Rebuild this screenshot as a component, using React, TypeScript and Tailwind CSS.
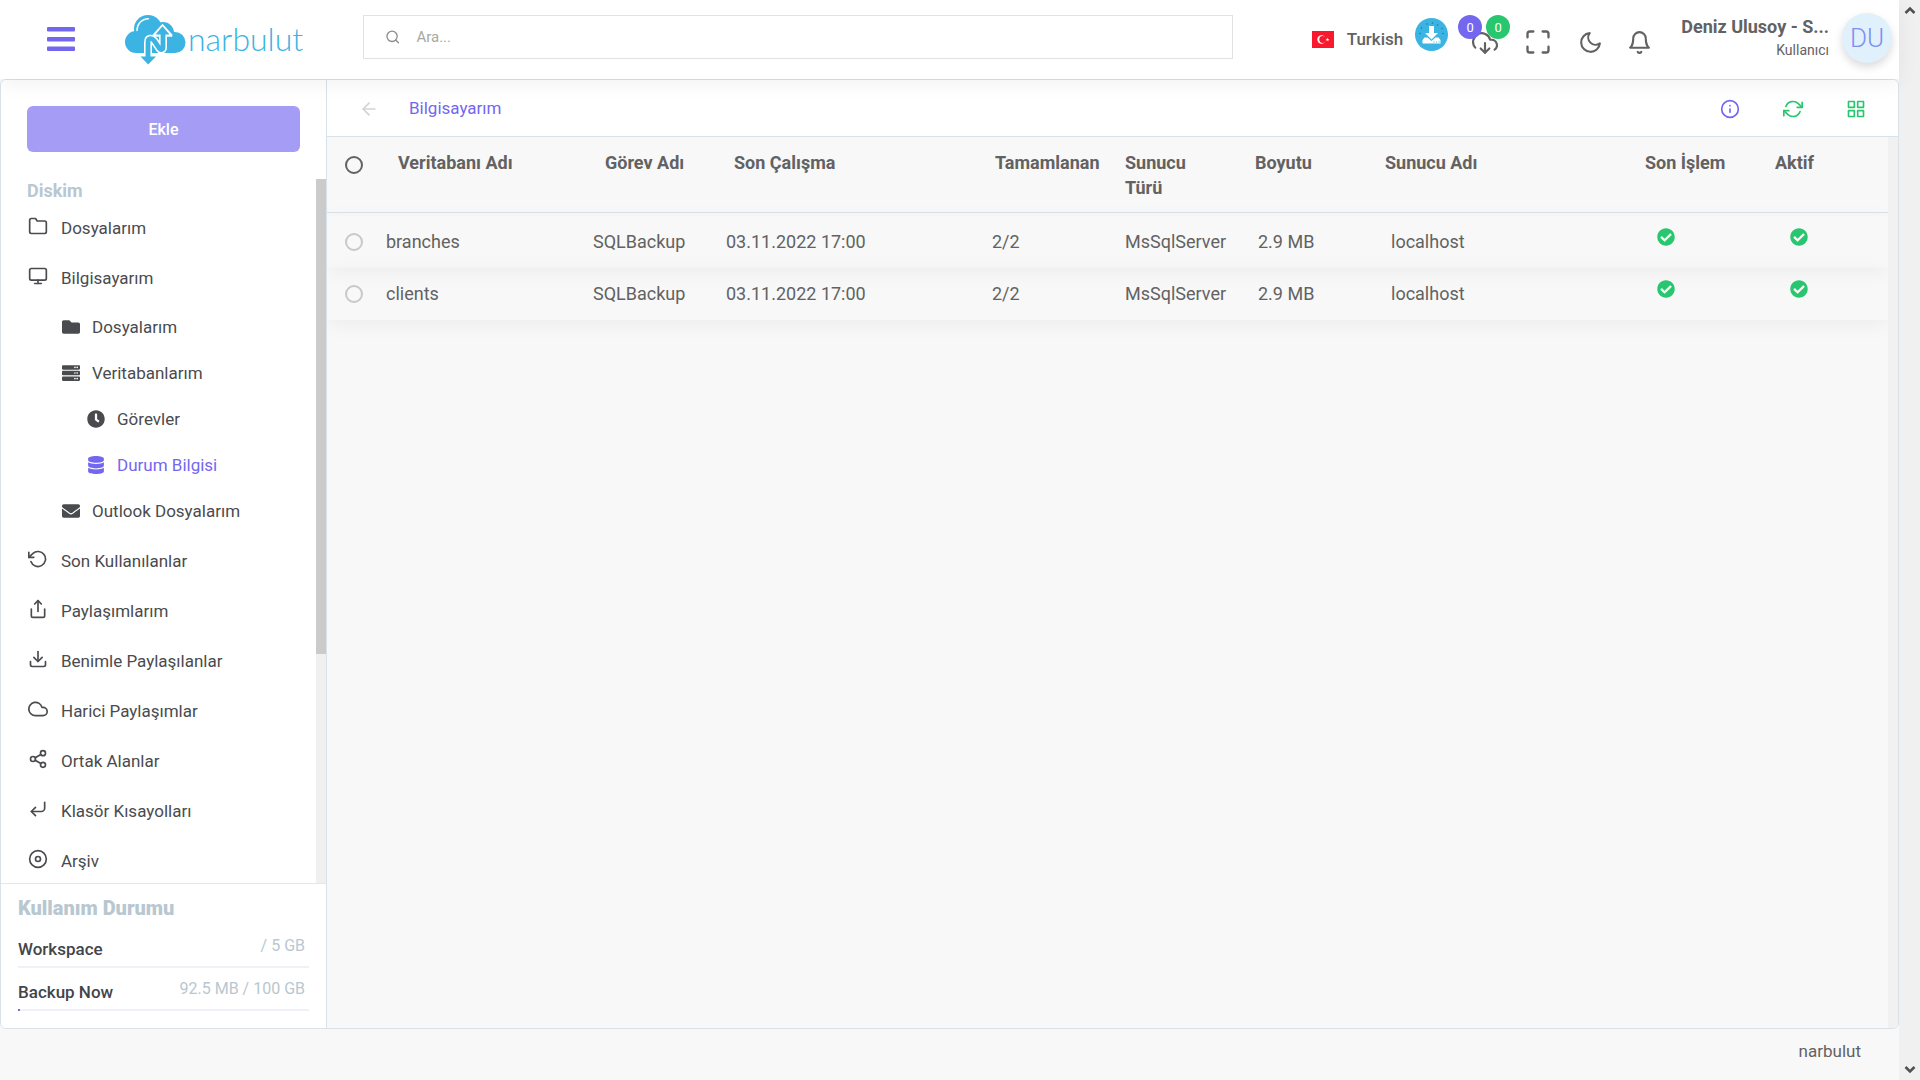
import React, { useState } from 'react'
import {
  FiArrowLeft,
  FiBell,
  FiCloud,
  FiCornerDownLeft,
  FiDisc,
  FiDownload,
  FiDownloadCloud,
  FiFolder,
  FiGrid,
  FiInfo,
  FiMaximize,
  FiMonitor,
  FiMoon,
  FiRefreshCw,
  FiRotateCcw,
  FiSearch,
  FiShare,
  FiShare2,
} from 'react-icons/fi'
import { FaCheckCircle, FaClock, FaDatabase, FaEnvelope, FaFolder, FaServer } from 'react-icons/fa'

const computerItems = [
  { label: 'Dosyalarım', icon: FaFolder, nested: false },
  { label: 'Veritabanlarım', icon: FaServer, nested: false },
  { label: 'Görevler', icon: FaClock, nested: true },
  { label: 'Durum Bilgisi', icon: FaDatabase, nested: true, active: true },
  { label: 'Outlook Dosyalarım', icon: FaEnvelope, nested: false },
]

const otherItems = [
  { label: 'Son Kullanılanlar', icon: FiRotateCcw },
  { label: 'Paylaşımlarım', icon: FiShare },
  { label: 'Benimle Paylaşılanlar', icon: FiDownload },
  { label: 'Harici Paylaşımlar', icon: FiCloud },
  { label: 'Ortak Alanlar', icon: FiShare2 },
  { label: 'Klasör Kısayolları', icon: FiCornerDownLeft },
  { label: 'Arşiv', icon: FiDisc },
]

const usage = [
  { label: 'Workspace', value: '/ 5 GB', percent: 0 },
  { label: 'Backup Now', value: '92.5 MB / 100 GB', percent: 0.7 },
]

const rows = [
  { name: 'branches', task: 'SQLBackup', lastRun: '03.11.2022 17:00', done: '2/2', type: 'MsSqlServer', size: '2.9 MB', server: 'localhost' },
  { name: 'clients', task: 'SQLBackup', lastRun: '03.11.2022 17:00', done: '2/2', type: 'MsSqlServer', size: '2.9 MB', server: 'localhost' },
]

function Logo() {
  return (
    <a href="#" className="flex h-[50px] items-center text-[#3bb3e3]">
      <svg className="h-[50px] w-[61px]" viewBox="0 0 61 50" fill="none">
        <g fill="currentColor">
          <circle cx="11" cy="27" r="11" />
          <circle cx="23" cy="14" r="14" />
          <circle cx="38" cy="18" r="11" />
          <circle cx="50" cy="27.5" r="10.5" />
          <rect x="11" y="18" width="39" height="20" />
        </g>
        <path d="M12 15.5C12 9 16.5 4 23.5 3.7" stroke="white" strokeWidth="1.4" strokeLinecap="round" />
        <path d="M23 42V27.5c0-5 4-4.500 6-2l5.500 8c1.500 2 3.500 1 3.500-1V18" stroke="white" strokeWidth="8" />
        <path d="M37.500 8.800 27.800 19.500v2.200h19.500v-2.200z" fill="white" />
        <path d="M23 42V27.500c0-5 4-4.500 6-2l5.500 8c1.500 2 3.500 1 3.500-1V18" stroke="currentColor" strokeWidth="4.800" />
        <path d="M37.500 11.200 30.500 19.500h14z" fill="currentColor" />
        <path d="M15.500 41.500h15.500L23.200 49.500z" fill="currentColor" />
      </svg>
      <span className="pb-[2px] pl-[2px] font-['Lato',sans-serif] text-[32px] font-light leading-[48px]">narbulut</span>
    </a>
  )
}

function TurkishFlag() {
  return (
    <svg className="h-[17px] w-[22px]" viewBox="0 0 22 17">
      <rect width="22" height="17" fill="#f8192f" />
      <circle cx="9.500" cy="8.500" r="4.200" fill="white" />
      <circle cx="10.700" cy="8.500" r="3.400" fill="#f8192f" />
      <path d="m15.500 6.800.5 1.200 1.300.1-1 .8.3 1.300-1.100-.7-1.100.7.300-1.300-1-.8 1.300-.1z" fill="white" />
    </svg>
  )
}

function DownloadApp() {
  return (
    <svg className="size-[33px]" viewBox="0 0 33 33">
      <circle cx="16.500" cy="16.500" r="16.500" fill="#3bb3e3" />
      <g fill="#24708f">
        <circle cx="12" cy="6" r=".7" />
        <circle cx="17.500" cy="5" r=".7" />
        <circle cx="22.500" cy="7" r=".7" />
        <circle cx="6.500" cy="10" r=".7" />
        <circle cx="27" cy="10.500" r=".7" />
        <circle cx="5" cy="15.500" r=".7" />
        <circle cx="28" cy="15.500" r=".7" />
      </g>
      <path d="M14 8h5v7h4l-6.500 6.500L10 15h4z" fill="white" />
      <path d="M9.500 19.500h3l4 3.500 4-3.500h3l2 2.500v3.500h-18V22z" fill="white" />
      <path d="M18.500 24h1M21 24h1M23.500 24h1" stroke="#3bb3e3" />
    </svg>
  )
}

function Header() {
  return (
    <header className="relative z-10 flex h-[79px] items-start bg-white shadow-[0_4px_20px_rgba(0,0,0,0.06)]">
      <button aria-label="Menu" className="ml-[47px] mt-[27px] text-[#7367f0]">
        <svg className="h-[24px] w-[28px]" viewBox="0 0 28 24" fill="currentColor">
          <rect width="28" height="4.500" rx="1" />
          <rect y="10" width="28" height="4.500" rx="1" />
          <rect y="19.500" width="28" height="4.500" rx="1" />
        </svg>
      </button>

      <div className="ml-[50px] mt-[15px] w-[238px]">
        <Logo />
      </div>

      <label className="mt-[15px] flex h-[44px] flex-1 items-center gap-4 border border-[#e2e2e2] pl-[21px]">
        <FiSearch className="size-4 text-[#8a8a8a]" />
        <input
          type="text"
          aria-label="Ara"
          placeholder="Ara..."
          className="w-full text-[15px] outline-none placeholder:text-[#a8a8a0]"
        />
      </label>

      <div className="ml-[79px] flex items-start">
        <button className="mt-[27px] flex items-center gap-[13px] text-[17px] leading-6 font-medium">
          <TurkishFlag />
          Turkish
        </button>
        <a href="#" aria-label="İndir" className="ml-3 mt-[18px]">
          <DownloadApp />
        </a>
        <button aria-label="İndirilenler" className="relative ml-[10px] mt-[15px] h-[40px] w-[52px]">
          <FiDownloadCloud className="ml-[14px] mt-[15px] size-[26px]" />
          <span className="absolute left-0 top-0 size-6 rounded-full bg-[#7367f0] text-[13px] leading-[26px] text-white">0</span>
          <span className="absolute right-0 top-0 size-6 rounded-full bg-[#28c76f] text-[13px] leading-[26px] text-white">0</span>
        </button>
        <button aria-label="Tam ekran" className="ml-[14px] mt-[28px]">
          <FiMaximize className="size-[28px]" />
        </button>
        <button aria-label="Karanlık mod" className="ml-[26px] mt-[30px]">
          <FiMoon className="size-[25px]" />
        </button>
        <button aria-label="Bildirimler" className="ml-[24px] mt-[30px]">
          <FiBell className="size-[25px]" />
        </button>
        <div className="ml-[29px] mt-[15px] text-right">
          <p className="text-lg font-bold leading-6">Deniz Ulusoy - S...</p>
          <p className="text-sm leading-[22px]">Kullanıcı</p>
        </div>
        <button className="ml-[13px] mr-[7px] mt-[13px] size-[50px] rounded-full bg-[#e0f1fb] text-[26px] font-light leading-[50px] text-[#7f8ff2] shadow-[0_4px_8px_rgba(0,0,0,0.15)]">
          DU
        </button>
      </div>
    </header>
  )
}

function NavItem({ label, icon: Icon }: { label: string; icon: React.ElementType }) {
  return (
    <li>
      <a href="#" className="flex h-[50px] items-center gap-[13px] pl-[27px] leading-6">
        <Icon className="mb-1 size-5" />
        {label}
      </a>
    </li>
  )
}

function Sidebar() {
  return (
    <aside className="flex w-[326px] shrink-0 flex-col border-r border-[#d9e1e9] bg-white text-[17px] text-[#4a4b4e]">
      <div className="px-[26px] pb-[27px] pt-[26px]">
        <button className="h-[46px] w-full rounded-md bg-[#a59cf5] pt-[2px] text-base font-medium text-white">Ekle</button>
      </div>

      <div className="flex flex-1">
        <nav className="-mb-1 flex-1">
          <h2 className="pl-[26px] text-lg leading-6 font-bold text-[#b8c7d0]">Diskim</h2>
          <ul>
            <NavItem label="Dosyalarım" icon={FiFolder} />
            <NavItem label="Bilgisayarım" icon={FiMonitor} />
            <li>
              <ul className="pb-px pt-[2px]">
                {computerItems.map(({ label, icon: Icon, nested, active }) => (
                  <li key={label}>
                    <a
                      href="#"
                      className={`flex h-[46px] items-center gap-3 ${nested ? 'pl-[86px]' : 'pl-[61px]'} ${active ? 'text-[#7367f0]' : ''}`}
                    >
                      <Icon className="mb-[2px] h-[18px] w-auto" />
                      {label}
                    </a>
                  </li>
                ))}
              </ul>
            </li>
            {otherItems.map((item) => (
              <NavItem key={item.label} label={item.label} icon={item.icon} />
            ))}
          </ul>
        </nav>
        <div className="w-[10px] bg-[#f0f0f0]">
          <div className="h-[67.5%] bg-[#cbcbcb]" />
        </div>
      </div>

      <div className="border-t border-[#e6e6e6] pb-[8px] pl-[17px] pr-[17px] pt-3">
        <h2 className="mb-[14px] text-xl leading-6 font-black text-[#b8c7d0]">Kullanım Durumu</h2>
        {usage.map((item) => (
          <div key={item.label} className="h-[43px]">
            <div className="flex h-[32px] justify-between">
              <span className="pt-[3px] leading-6 font-medium text-[#43454a]">{item.label}</span>
              <span className="pr-1 text-base text-[#b8c7d0]">{item.value}</span>
            </div>
            <div className="h-[2px] bg-[#f1f0f6]">
              <div className="h-full bg-[#7367f0]" style={{ width: `${item.percent}%` }} />
            </div>
          </div>
        ))}
      </div>
    </aside>
  )
}

function BackupTable() {
  const [selected, setSelected] = useState<string[]>([])

  const toggle = (name: string) => {
    setSelected(selected.includes(name) ? selected.filter((n) => n !== name) : [...selected, name])
  }

  return (
    <table className="w-full table-fixed border-separate border-spacing-0 text-left">
      <colgroup>
        <col className="w-[59px]" />
        <col className="w-[207px]" />
        <col className="w-[133px]" />
        <col className="w-[266px]" />
        <col className="w-[133px]" />
        <col className="w-[130px]" />
        <col className="w-[130px]" />
        <col className="w-[260px]" />
        <col className="w-[130px]" />
        <col className="w-[113px]" />
      </colgroup>
      <thead>
        <tr className="align-top text-lg leading-[25px] [&>th]:border-b [&>th]:border-[#d9e1e9] [&>th]:pb-3 [&>th]:pt-[13px]">
          <th className="pl-[18px]">
            <input
              type="checkbox"
              aria-label="Tümünü seç"
              checked={selected.length === rows.length}
              onChange={() => setSelected(selected.length === rows.length ? [] : rows.map((r) => r.name))}
              className="mt-[6px] block size-[18px] appearance-none rounded-full border-2 border-[#626262] checked:bg-[#7367f0]"
            />
          </th>
          <th className="pl-3">Veritabanı Adı</th>
          <th className="pl-3">Görev Adı</th>
          <th className="pl-2">Son Çalışma</th>
          <th className="pl-[3px]">Tamamlanan</th>
          <th className="pr-12">Sunucu Türü</th>
          <th>Boyutu</th>
          <th>Sunucu Adı</th>
          <th>Son İşlem</th>
          <th>Aktif</th>
        </tr>
      </thead>
      <tbody className="before:block before:h-[3px]">
        {rows.map((row) => (
          <tr key={row.name} className="h-[52px] text-lg leading-6 shadow-[0_4px_20px_rgba(0,0,0,0.05)]">
            <td className="pl-[18px]">
              <input
                type="checkbox"
                aria-label={row.name}
                checked={selected.includes(row.name)}
                onChange={() => toggle(row.name)}
                className="block size-[18px] appearance-none rounded-full border-2 border-[#c8c8c8] checked:bg-[#7367f0]"
              />
            </td>
            <td>{row.name}</td>
            <td>{row.task}</td>
            <td>{row.lastRun}</td>
            <td>{row.done}</td>
            <td>{row.type}</td>
            <td className="pl-[3px]">{row.size}</td>
            <td className="pl-[6px]">{row.server}</td>
            <td className="pl-3 pt-3 align-top">
              <FaCheckCircle className="size-[18px] text-[#28c76f]" />
            </td>
            <td className="pl-[15px] pt-3 align-top">
              <FaCheckCircle className="size-[18px] text-[#28c76f]" />
            </td>
          </tr>
        ))}
      </tbody>
    </table>
  )
}

export default function App() {
  return (
    <div className="flex min-h-screen bg-[#f8f8f8] font-['Roboto',sans-serif] text-[#626262]">
      <div className="flex min-w-0 flex-1 flex-col">
        <Header />

        <main className="flex flex-1 overflow-hidden rounded-md border border-[#d9e1e9]">
          <Sidebar />

          <section className="flex min-w-0 flex-1 flex-col">
            <div className="flex h-[57px] items-center border-b border-[#d9e1e9] bg-white px-[32px] pt-[2px]">
              <button aria-label="Geri" className="text-[#d3d3d3]">
                <FiArrowLeft className="size-5" />
              </button>
              <a href="#" className="ml-[30px] text-[17px] text-[#7367f0]">Bilgisayarım</a>
              <div className="ml-auto flex items-center gap-[43px]">
                <button aria-label="Bilgi" className="text-[#7367f0]"><FiInfo className="size-5" /></button>
                <button aria-label="Yenile" className="text-[#28c76f]"><FiRefreshCw className="size-5" /></button>
                <button aria-label="Izgara görünümü" className="text-[#28c76f]"><FiGrid className="size-5" /></button>
              </div>
            </div>

            <div className="flex flex-1">
              <div className="min-w-0 flex-1 overflow-hidden">
                <BackupTable />
              </div>
              <div className="w-[10px] bg-[#f1f1f1]" />
            </div>
          </section>
        </main>

        <footer className="h-[51px] pr-[38px] pt-[10px] text-right text-[17px] leading-6">narbulut</footer>
      </div>

      <div className="flex w-[21px] flex-col items-center justify-between bg-[#f0f0f0] py-[6px] text-[#505050]">
        <svg className="h-[9px] w-[12px]" viewBox="0 0 12 9" fill="none" stroke="currentColor" strokeWidth="2.500">
          <path d="m1.500 7 4.500-4.500L10.500 7" />
        </svg>
        <svg className="h-[9px] w-[12px]" viewBox="0 0 12 9" fill="none" stroke="currentColor" strokeWidth="2.500">
          <path d="m1.500 2 4.500 4.500L10.500 2" />
        </svg>
      </div>
    </div>
  )
}
